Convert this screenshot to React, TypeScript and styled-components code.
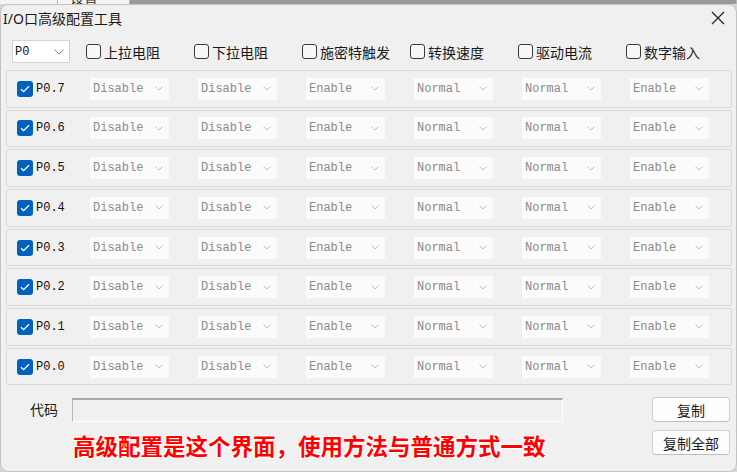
import React from "react";
import styled, { createGlobalStyle } from "styled-components";

const GlobalStyle = createGlobalStyle`
  html, body { margin: 0; padding: 0; background: #d6d6d6; }
  body {
    width: 737px; height: 472px; overflow: hidden;
    font-family: "Noto Sans", "Noto Sans CJK SC", sans-serif;
    color: #1a1a1a;
  }
  * { box-sizing: border-box; }
`;

const BackStrip = styled.div`
  height: 4px;
  display: flex;
  overflow: hidden;
`;
const BackPart = styled.div<{ $w?: number; $bg: string }>`
  ${(p) => (p.$w ? `width: ${p.$w}px;` : "flex: 1;")}
  background: ${(p) => p.$bg};
  border-right: 1px solid #b8b8b8;
  overflow: hidden;
  font-size: 14px;
  line-height: 14px;
  padding-left: 12px;
`;
const BackText = styled.div`
  margin-top: -10px;
  font-family: "Noto Sans CJK SC", sans-serif;
  color: #333;
`;

const Win = styled.div`
  height: 468px;
  background: #f0f0f0;
  border-radius: 8px;
  box-shadow: inset 0 0 0 1px #c2c2c2;
  overflow: hidden;
  display: flex;
  flex-direction: column;
`;

const TitleBar = styled.div`
  height: 28px;
  display: flex;
  align-items: center;
  justify-content: space-between;
  padding: 0 12px 0 3px;
`;
const Title = styled.div`
  font-size: 14px;
  font-family: "Noto Sans", "Noto Sans CJK SC", sans-serif;
  color: #1a1a1a;
`;
const CloseBtn = styled.svg`
  width: 14px;
  height: 14px;
  display: block;
`;

const Toolbar = styled.div`
  margin-top: 8px;
  height: 23px;
  display: flex;
  align-items: center;
  padding-left: 12px;
`;
const PortSelect = styled.div`
  width: 58px;
  height: 23px;
  background: #fff;
  border: 1px solid #d4d4d4;
  display: flex;
  align-items: center;
  justify-content: space-between;
  padding: 0 5px 0 2px;
  font-family: "Liberation Mono", monospace;
  font-size: 12px;
  color: #111;
`;
const CheckGroup = styled.div`
  margin-left: 16px;
  display: flex;
`;
const CheckItem = styled.label`
  width: 108px;
  display: flex;
  align-items: center;
  gap: 3px;
  font-size: 14px;
  font-family: "Noto Sans CJK SC", sans-serif;
  color: #1a1a1a;
`;
const EmptyBox = styled.span`
  width: 15px;
  height: 15px;
  border: 1px solid #3a3a3a;
  border-radius: 3px;
  background: #f7f7f7;
  display: inline-block;
`;

const RowList = styled.div`
  margin: 7px 5px 0 6px;
  display: flex;
  flex-direction: column;
  gap: 2.2px;
`;
const Row = styled.div`
  height: 37.5px;
  border: 1px solid #dadada;
  border-radius: 2px;
  display: flex;
  align-items: center;
  padding-left: 10px;
`;
const BlueCheck = styled.span`
  width: 16px;
  height: 16px;
  border-radius: 3px;
  background: #0062be;
  display: flex;
  align-items: center;
  justify-content: center;
`;
const PinLabel = styled.span`
  margin-left: 3px;
  width: 54px;
  font-family: "Liberation Mono", monospace;
  font-size: 12px;
  color: #111;
`;
const Dropdowns = styled.div`
  display: flex;
  gap: 29px;
`;
const Drop = styled.div`
  width: 79px;
  height: 22px;
  background: #fbfbfb;
  display: flex;
  align-items: center;
  justify-content: space-between;
  padding: 0 6px 0 3px;
  font-family: "Liberation Mono", monospace;
  font-size: 12px;
  color: #8a8a8a;
`;

const Footer = styled.div`
  flex: 1;
  display: grid;
  grid-template-columns: 1fr auto;
  padding-top: 12px;
`;
const LeftArea = styled.div`
  padding: 1px 0 0 30px;
`;
const CodeRow = styled.div`
  display: flex;
  align-items: center;
`;
const CodeLabel = styled.span`
  width: 28px;
  margin-right: 14px;
  font-size: 14px;
  line-height: 20px;
  margin-bottom: 2px;
  font-family: "Noto Sans CJK SC", sans-serif;
  color: #1a1a1a;
`;
const CodeInput = styled.div`
  width: 491px;
  height: 24px;
  background: #f0f0f0;
  border-top: 2px solid #a8a8a8;
  border-left: 1px solid #b8b8b8;
  border-right: 1px solid #ffffff;
  border-bottom: 1px solid #ffffff;
`;
const RedNote = styled.div`
  margin: 11px 0 0 43px;
  font-family: "Noto Sans CJK SC", sans-serif;
  font-weight: 700;
  font-size: 22.5px;
  line-height: 24px;
  color: #ff0000;
  white-space: nowrap;
  text-shadow: 1px 0 0 #fff, -1px 0 0 #fff, 0 1px 0 #fff, 0 -1px 0 #fff,
    1px 1px 0 #fff, -1px -1px 0 #fff, 1px -1px 0 #fff, -1px 1px 0 #fff;
`;
const ButtonCol = styled.div`
  width: 78px;
  margin-right: 7px;
  display: flex;
  flex-direction: column;
  gap: 8px;
`;
const Btn = styled.button`
  height: 25px;
  background: #fdfdfd;
  border: 1px solid #d0d0d0;
  border-bottom-color: #bdbdbd;
  border-radius: 4px;
  font-family: "Noto Sans CJK SC", sans-serif;
  font-size: 14px;
  color: #1a1a1a;
  padding: 0;
`;

const Chevron = ({ w = 8, color = "#bdbdbd" }: { w?: number; color?: string }) => (
  <svg width={w} height={w / 2 + 1} viewBox={`0 0 ${w} ${w / 2 + 1}`}>
    <path d={`M0.5 0.5 L${w / 2} ${w / 2} L${w - 0.5} 0.5`} fill="none" stroke={color} strokeWidth="1" />
  </svg>
);

const Tick = () => (
  <svg width="10" height="8" viewBox="0 0 10 8">
    <path d="M1 4.2 L3.6 6.6 L9 1.2" fill="none" stroke="#fff" strokeWidth="1.3" />
  </svg>
);

const headers = ["上拉电阻", "下拉电阻", "施密特触发", "转换速度", "驱动电流", "数字输入"];
const values = ["Disable", "Disable", "Enable", "Normal", "Normal", "Enable"];
const pins = [7, 6, 5, 4, 3, 2, 1, 0];

export default function App() {
  return (
    <>
      <GlobalStyle />
      <BackStrip>
        <BackPart $w={58} $bg="#f4f4f4" />
        <BackPart $w={72} $bg="#f4f4f4">
          <BackText>设置</BackText>
        </BackPart>
        <BackPart $bg="#9a9a9a" />
      </BackStrip>
      <Win>
        <TitleBar>
          <Title>I/O口高级配置工具</Title>
          <CloseBtn viewBox="0 0 14 14">
            <path d="M1 1 L13 13 M13 1 L1 13" stroke="#222" strokeWidth="1.2" />
          </CloseBtn>
        </TitleBar>
        <Toolbar>
          <PortSelect>
            <span>P0</span>
            <Chevron w={10} color="#888" />
          </PortSelect>
          <CheckGroup>
            {headers.map((h) => (
              <CheckItem key={h}>
                <EmptyBox />
                {h}
              </CheckItem>
            ))}
          </CheckGroup>
        </Toolbar>
        <RowList>
          {pins.map((p) => (
            <Row key={p}>
              <BlueCheck>
                <Tick />
              </BlueCheck>
              <PinLabel>P0.{p}</PinLabel>
              <Dropdowns>
                {values.map((v, i) => (
                  <Drop key={i}>
                    <span>{v}</span>
                    <Chevron />
                  </Drop>
                ))}
              </Dropdowns>
            </Row>
          ))}
        </RowList>
        <Footer>
          <LeftArea>
            <CodeRow>
              <CodeLabel>代码</CodeLabel>
              <CodeInput />
            </CodeRow>
            <RedNote>高级配置是这个界面，使用方法与普通方式一致</RedNote>
          </LeftArea>
          <ButtonCol>
            <Btn>复制</Btn>
            <Btn>复制全部</Btn>
          </ButtonCol>
        </Footer>
      </Win>
    </>
  );
}
